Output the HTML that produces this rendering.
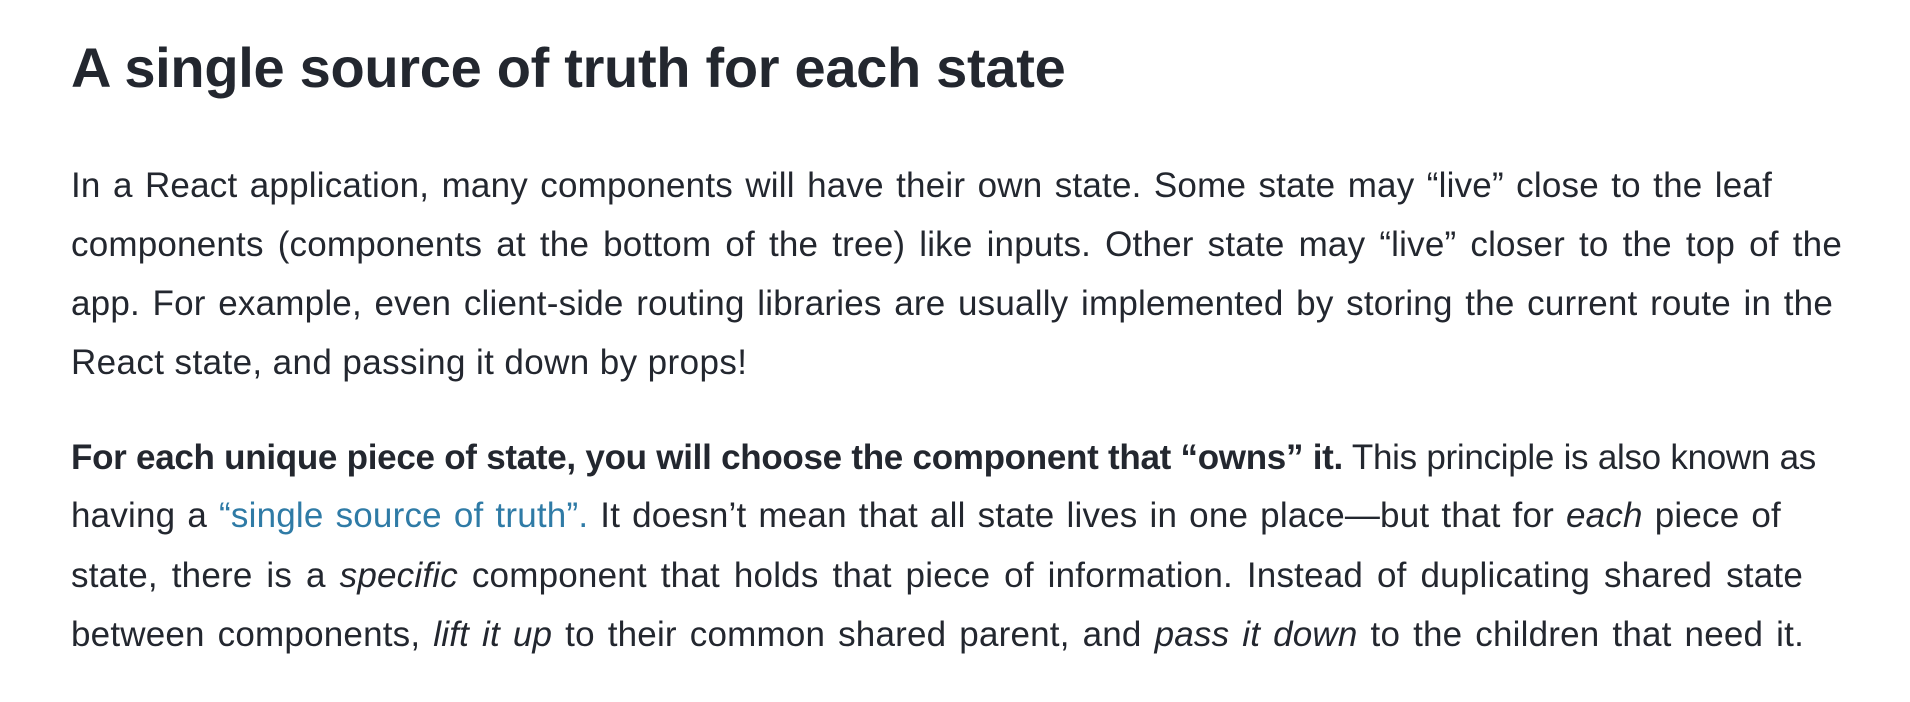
<!DOCTYPE html>
<html><head><meta charset="utf-8"><style>
body{margin:0;width:1910px;height:702px;background:#fff;color:#23272f;font-family:"Liberation Sans",sans-serif;overflow:hidden;position:relative}
h2{position:absolute;left:71px;top:36px;margin:0;font-size:56px;font-weight:700;line-height:64px;white-space:nowrap;letter-spacing:-0.3px}
.l{position:absolute;left:71px;font-size:35px;line-height:40px;white-space:nowrap;text-align:justify;text-align-last:justify;letter-spacing:0.2px}
.n{text-align-last:left;letter-spacing:0.4px}
a{color:#2f7ba6;text-decoration:none}
</style></head><body>
<h2>A single source of truth for each state</h2>
<div class="l" style="top:166px;width:1701px">In a React application, many components will have their own state. Some state may “live” close to the leaf</div>
<div class="l" style="top:225px;width:1771px">components (components at the bottom of the tree) like inputs. Other state may “live” closer to the top of the</div>
<div class="l" style="top:284px;width:1762px">app. For example, even client-side routing libraries are usually implemented by storing the current route in the</div>
<div class="l n" style="top:343px;width:700px">React state, and passing it down by props!</div>
<div class="l" style="top:438px;width:1745px;letter-spacing:-0.3px"><b>For each unique piece of state, you will choose the component that “owns” it.</b> This principle is also known as</div>
<div class="l" style="top:496px;width:1710px">having a <a>“single source of truth”.</a> It doesn’t mean that all state lives in one place—but that for <i>each</i> piece of</div>
<div class="l" style="top:556px;width:1732px">state, there is a <i>specific</i> component that holds that piece of information. Instead of duplicating shared state</div>
<div class="l" style="top:615px;width:1733px">between components, <i>lift it up</i> to their common shared parent, and <i>pass it down</i> to the children that need it.</div>
</body></html>
